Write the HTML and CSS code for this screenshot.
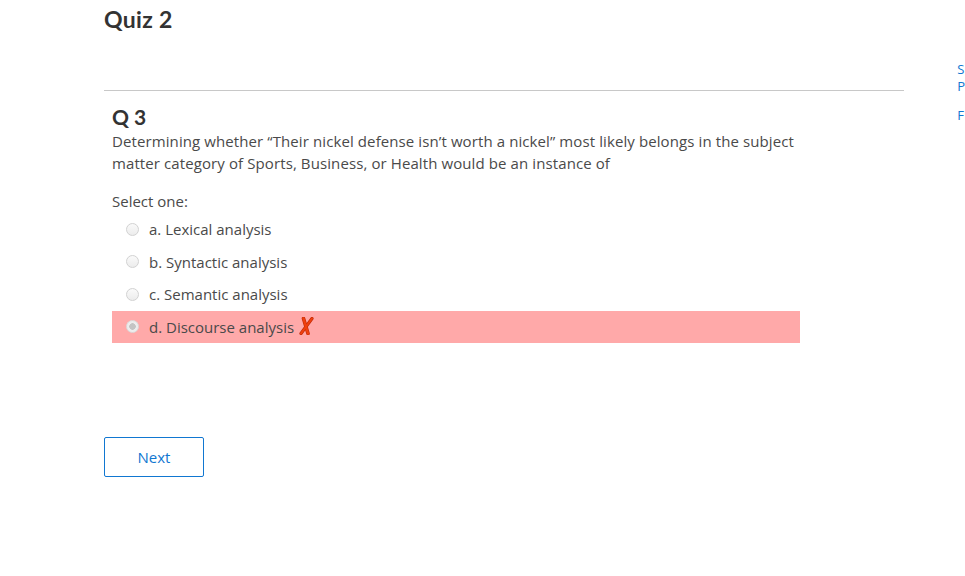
FILE: index.html
```html
<!DOCTYPE html>
<html>
<head>
<meta charset="utf-8">
<link rel="stylesheet" href="styles.css">
</head>
<body>
<div class="page">
  <main class="main">
    <h1 class="title">Quiz 2</h1>
    <hr class="rule">
    <section class="question">
      <h2 class="qno">Q 3</h2>
      <p class="qtext">Determining whether “Their nickel defense isn’t worth a nickel” most likely belongs in the subject matter category of Sports, Business, or Health would be an instance of</p>
      <div class="prompt">Select one:</div>
      <div class="answers">
        <div class="opt"><span class="radio"></span><span>a. Lexical analysis</span></div>
        <div class="opt"><span class="radio"></span><span>b. Syntactic analysis</span></div>
        <div class="opt"><span class="radio"></span><span>c. Semantic analysis</span></div>
        <div class="opt wrong"><span class="radio checked"></span><span>d. Discourse analysis</span><svg class="xmark" width="15" height="18" viewBox="0 0 15 18"><path d="M4.5 1.5 L9 16.5" stroke="#c02a08" stroke-width="3.6" stroke-linecap="round" fill="none"/><path d="M13 1.5 L2 16.5" stroke="#c02a08" stroke-width="3.2" stroke-linecap="round" fill="none"/><path d="M4.5 1.5 L9 16.5" stroke="#f0400e" stroke-width="2.4" stroke-linecap="round" fill="none"/><path d="M13 1.5 L2 16.5" stroke="#f0400e" stroke-width="2" stroke-linecap="round" fill="none"/></svg></div>
      </div>
    </section>
    <div class="nav"><button class="next">Next</button></div>
  </main>
  <aside class="side">
    <a class="sl">S</a>
    <a class="sl">P</a>
    <a class="sl gap">F</a>
  </aside>
</div>
</body>
</html>
```
FILE: styles.css
```css
html, body { margin: 0; padding: 0; background: #fff; }
body { font-family: "Open Sans", "Lato", sans-serif; color: #4a4a4a; }
.page { display: flex; }
.main { margin-left: 104px; width: 801px; }
.title { font-family: "Lato", sans-serif; font-weight: 700; font-size: 23px; color: #333; margin: 4px 0 0; line-height: 30px; letter-spacing: 0.3px; }
.rule { border: 0; border-top: 1px solid #c8c8c8; margin: 56px 0 0; height: 0; }
.question { padding: 13px 0 0 8px; }
.qno { font-family: "Lato", sans-serif; font-weight: 700; font-size: 21px; color: #333; margin: 0; line-height: 26px; }
.qtext { font-size: 15px; line-height: 22px; margin: 0; width: 690px; letter-spacing: 0.1px; }
.prompt { font-size: 15px; line-height: 20px; margin-top: 17px; }
.answers { width: 688px; margin-top: 2px; }
.opt { display: flex; align-items: center; height: 32.5px; font-size: 15px; padding-left: 14px; }
.radio { width: 13px; height: 13px; border: 1px solid #d2d2d2; border-radius: 50%; margin-right: 10px; background: linear-gradient(#fafafa, #ececec); box-sizing: border-box; }
.radio.checked { background: radial-gradient(circle, #c4c4c4 0 3px, #ededed 3.5px); border-color: #dcdcdc; }
.wrong { background: #ffa9a9; }
.xmark { margin-left: 5px; margin-top: -2px; }
.nav { margin-top: 94px; }
.next { width: 100px; height: 40px; background: #fff; border: 1px solid #1177d1; border-radius: 2px; color: #1177d1; font-family: "Open Sans", sans-serif; font-size: 15px; }
.side { display: flex; flex-direction: column; margin-left: 53px; padding-top: 61px; }
.sl { color: #1177d1; font-size: 13px; line-height: 17px; }
.gap { margin-top: 12px; }
```
